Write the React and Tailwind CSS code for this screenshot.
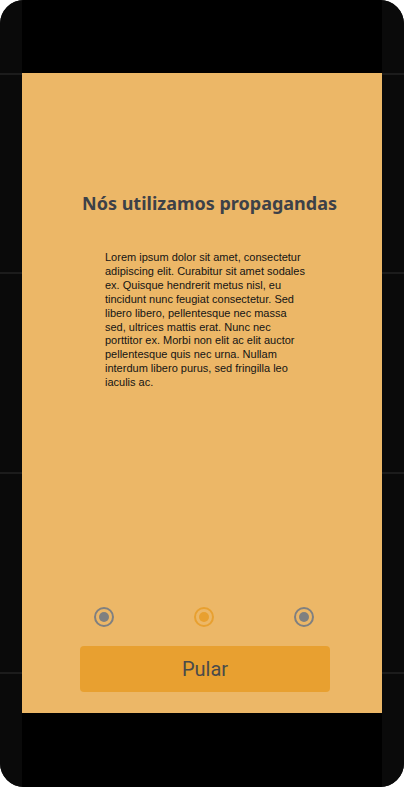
import React, { useState } from 'react';

function SideStrip() {
    return (
        <div className="w-[22px] flex flex-col bg-[#0a0a0a]">
            <div className="h-[73px]" />
            <div className="h-[199px] border-t-2 border-[#1c1c1c]" />
            <div className="h-[200px] border-t-2 border-[#1c1c1c]" />
            <div className="h-[200px] border-t-2 border-[#1c1c1c]" />
            <div className="flex-1 border-t-2 border-[#1c1c1c]" />
        </div>
    );
}

function Dot({ active }) {
    return (
        <div
            className={`w-[20px] h-[20px] rounded-full border-2 flex items-center justify-center ${
                active ? 'border-[#e8a030]' : 'border-[#808080]'
            }`}
        >
            <div className={`w-[10px] h-[10px] rounded-full ${active ? 'bg-[#e8a030]' : 'bg-[#808080]'}`} />
        </div>
    );
}

export default function App() {
    const [page] = useState(1);

    return (
        <div className="w-[404px] h-[787px] rounded-[24px] overflow-hidden bg-[#0a0a0a] flex">
            <SideStrip />
            <div className="w-[360px] flex flex-col bg-black">
                <div className="h-[73px]" />
                <div className="h-[640px] bg-[#ecb767] flex flex-col">
                    <h1
                        className="mt-[118px] pl-[15px] text-center text-[18px] leading-[24px] font-bold text-[#3d4148]"
                        style={{ fontFamily: '"Noto Sans", sans-serif' }}
                    >
                        Nós utilizamos propagandas
                    </h1>
                    <p
                        className="mt-[36px] ml-[83px] w-[200px] text-[11px] leading-[13.9px] text-[#141414]"
                        style={{ fontFamily: '"Liberation Sans", Arial, sans-serif' }}
                    >
                        Lorem ipsum dolor sit amet, consectetur adipiscing elit. Curabitur sit amet sodales ex.
                        Quisque hendrerit metus nisl, eu tincidunt nunc feugiat consectetur. Sed libero libero,
                        pellentesque nec massa sed, ultrices mattis erat. Nunc nec porttitor ex. Morbi non elit ac
                        elit auctor pellentesque quis nec urna. Nullam interdum libero purus, sed fringilla leo
                        iaculis ac.
                    </p>
                    <div className="flex-1" />
                    <div className="ml-[72px] w-[220px] flex justify-between">
                        {[0, 1, 2].map((i) => (
                            <Dot key={i} active={i === page} />
                        ))}
                    </div>
                    <button
                        className="mt-[19px] mb-[21px] ml-[58px] w-[250px] h-[46px] rounded-[4px] bg-[#e8a030] text-[20px] text-[#4a4a4a]"
                        style={{ fontFamily: 'Roboto, sans-serif' }}
                    >
                        Pular
                    </button>
                </div>
                <div className="flex-1" />
            </div>
            <SideStrip />
        </div>
    );
}
